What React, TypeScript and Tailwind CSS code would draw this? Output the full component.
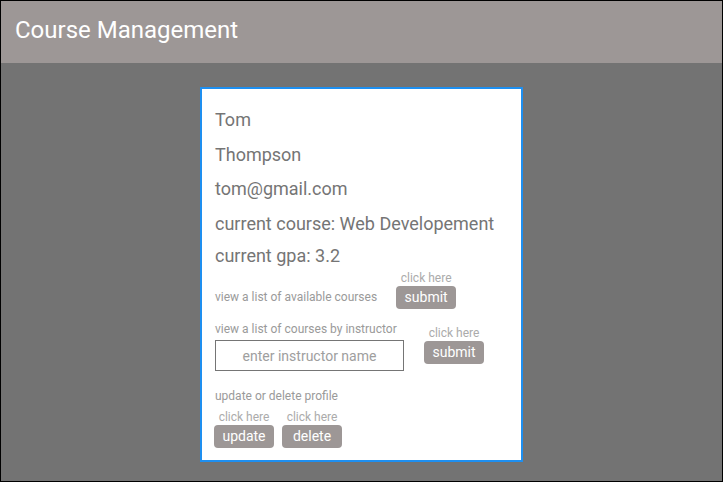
import React from "react";

const font = { fontFamily: "Roboto, 'Liberation Sans', sans-serif" };

function ActionButton({ label }: { label: string }) {
  return (
    <div className="flex flex-col items-center w-[60px]">
      <span className="text-[12px] leading-[14px] text-[#ababab]">click here</span>
      <button className="mt-[1px] w-[60px] h-[23px] rounded-[4px] bg-[#9d9796] text-white text-[14px] leading-[23px]">
        {label}
      </button>
    </div>
  );
}

export default function App() {
  return (
    <div
      className="w-[723px] h-[482px] border border-black bg-[#737373] flex flex-col overflow-hidden"
      style={font}
    >
      <div className="h-[62px] shrink-0 bg-[#9d9796] flex items-center pl-[14px]">
        <h1 className="text-white text-[24px] leading-none -mt-[4px]">Course Management</h1>
      </div>
      <div className="flex justify-center pt-[24px]">
        <div className="w-[323px] border-2 border-[#1e8ff0] bg-white pl-[13px] pt-[14px] pb-[12px] text-[#757575]">
          <div className="text-[18px]">
            <div className="h-[34px] leading-[34px]">Tom</div>
            <div className="h-[35px] leading-[35px]">Thompson</div>
            <div className="h-[34px] leading-[34px]">tom@gmail.com</div>
            <div className="h-[35px] leading-[35px]">current course: Web Developement</div>
            <div className="h-[30px] leading-[30px]">current gpa: 3.2</div>
          </div>
          <div className="flex items-end">
            <span className="text-[12px] leading-[14px] text-[#9a9a9a] mb-[5px]">
              view a list of available courses
            </span>
            <div className="ml-[19px]">
              <ActionButton label="submit" />
            </div>
          </div>
          <div className="flex items-start mt-[13px]">
            <div className="flex flex-col">
              <span className="text-[12px] leading-[14px] text-[#9a9a9a]">
                view a list of courses by instructor
              </span>
              <input
                className="mt-[4px] w-[189px] h-[31px] border border-[#757575] text-center text-[14px] text-[#757575] placeholder:text-[#9e9e9e] outline-none"
                placeholder="enter instructor name"
                style={font}
              />
            </div>
            <div className="ml-[20px] pt-[4px]">
              <ActionButton label="submit" />
            </div>
          </div>
          <div className="mt-[18px] text-[12px] leading-[14px] text-[#9a9a9a]">
            update or delete profile
          </div>
          <div className="flex gap-[8px] mt-[7px] -ml-[1px]">
            <ActionButton label="update" />
            <ActionButton label="delete" />
          </div>
        </div>
      </div>
    </div>
  );
}
